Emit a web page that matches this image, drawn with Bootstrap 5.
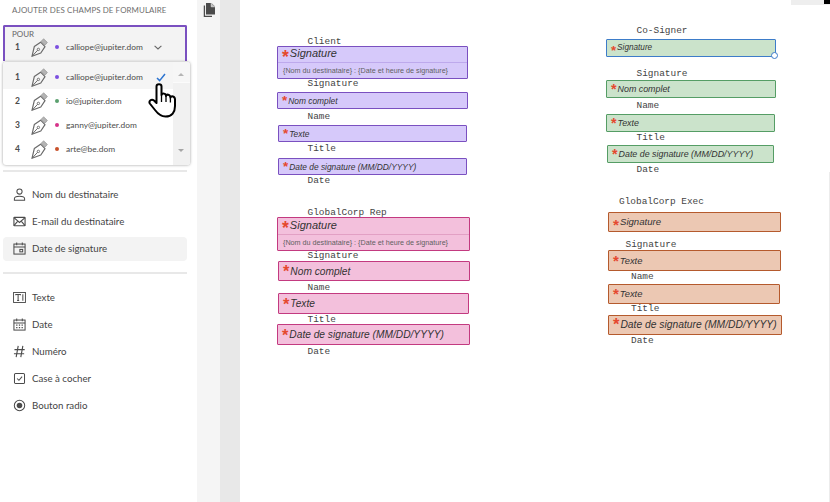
<!DOCTYPE html>
<html lang="fr">
<head>
<meta charset="utf-8">
<title>Ajouter des champs de formulaire</title>
<link href="https://cdn.jsdelivr.net/npm/bootstrap@5.3.0/dist/css/bootstrap.min.css" rel="stylesheet">
<style>
html,body{height:100%;margin:0;overflow:hidden;background:#fff}
body{font-family:Lato,"Open Sans",sans-serif;color:#4b4b4b}
.shell{width:830px;height:502px}
.side{width:197px;flex:none;padding:0 10px 0 3px}
.side-title{font-size:7.9px;letter-spacing:.1px;line-height:11px;padding:5px 0 0 9px;height:25px;color:#6e6e6e;text-transform:uppercase;white-space:nowrap}
.pour{height:36px;border:2px solid #7a50c0;border-bottom:0;border-radius:2px 2px 0 0;background:#f3f3f3;padding:3px 0 0 7px}
.pour-label{font-size:8px;line-height:9px;color:#666}
.rcp{display:flex;align-items:center;font-size:8.4px;height:24px;white-space:nowrap;color:#4b4b4b}
.pour .rcp{height:16px}
.rcp-num{width:11px;font-weight:700;font-size:8.5px;text-align:center;flex:none}
.nib{width:18px;height:19px;flex:none;margin:0 7px 0 7px}
.dot{width:4px;height:4px;border-radius:50%;flex:none;margin-right:7px}
.d-pur{background:#7b4fe0}.d-gre{background:#5aa06e}.d-pin{background:#d6338a}.d-ora{background:#c8512a}
.chev{width:8px;height:5px;margin-left:11px;flex:none}
.menu{width:187px;height:103px;margin-top:1px;background:#fff;border-radius:3px;box-shadow:0 0 3px rgba(0,0,0,.4);overflow:hidden}
.menu-rows{width:170px;flex:none}
.menu .rcp{padding-left:9px;margin-top:0;height:24px}
.menu .rcp.cur{height:27px;background:#f5f5f5;padding-top:3px}
.tick{width:10px;height:9px;margin-left:13px;flex:none}
.sbar{width:17px;flex:none;background:#f1f1f1;position:relative}
.sbar-top{height:21px;background:#f6f6f6;border-bottom:1px solid #fbfbfb}
.ar{width:0;height:0;border-left:3.5px solid transparent;border-right:3.5px solid transparent;position:absolute;left:5px}
.ar-up{border-bottom:3.5px solid #b5b5b5;top:11px}
.ar-dn{border-top:3.5px solid #a5a5a5;top:87px}
.hand{position:absolute;left:148px;top:83px;width:29px;height:35px}
.sep{height:2px;background:#e8e8e8;border:0;opacity:1;margin:0;color:#e8e8e8}
.sep-a{margin-top:5px}
.sep-b{margin-top:11px}
.fields{margin-top:11px}
.sep-b + .fields{margin-top:12px}
.fld{display:flex;align-items:center;height:24px;margin-bottom:3px;padding:0 0 1px 10px;border-radius:4px;font-size:9.7px;color:#444;white-space:nowrap;background:transparent;border:0}
.fld.on{background:#f3f3f3}
.fld svg{width:13px;height:13px;flex:none;margin-right:6px;color:#4b4b4b}
.rail{width:23px;flex:none;background:#f5f5f5;padding:3px 0 0 6px}
.rail svg{display:block;width:12px;height:14px}
.gut{width:20px;flex:none;background:#e8e8e8}
.doc{flex:1 1 auto;position:relative;background:#fff;overflow:hidden}
.corner{position:absolute;right:0;top:0;height:5px;width:39px;background:#eee}
.corner::after{content:"";position:absolute;right:0;top:0;width:6px;height:4px;background:#000}
.edge{position:absolute;right:0;top:172px;bottom:0;width:1px;background:#ececec}
.lab,.box{position:absolute;white-space:nowrap}
.lab{font-family:"Liberation Mono",monospace;font-size:9.45px;line-height:10px;color:#444}
.box{border:1px solid;border-radius:1px;font-family:"Liberation Sans",Arial,sans-serif;font-style:italic;color:#333;line-height:1;display:flex;flex-direction:column}
.box .top{display:flex;align-items:center;flex:1 1 auto;padding-left:4px}
.st{color:#e5492f;font-style:normal;font-weight:700;margin-right:1px;font-size:1.6em;line-height:.6;position:relative}
.s11 .st,.s82 .st,.s96 .st{top:.2em}
.sub{font-style:normal;font-size:7.2px;color:#5f5f5f;border-top:1px solid;height:16px;display:flex;align-items:center;padding-left:5px}
.pur{background:#d6c9fa;border-color:#7a50c0}.pur .sub{border-top-color:#bda9ec}
.pin{background:#f3c0dc;border-color:#c33a80}.pin .sub{border-top-color:#e2a0c4}
.gre{background:#cbe3cb;border-color:#559d65}
.ora{background:#ecc8b3;border-color:#b55a2d}
.sel{border-color:#3d7cc9}
.handle{position:absolute;right:-3px;bottom:-3px;width:7px;height:7px;border-radius:50%;background:#fff;border:1px solid #3d7cc9}
.s82{font-size:8.2px}.s84{font-size:8.4px}.s89{font-size:8.9px}.s94{font-size:9.4px}.s96{font-size:9.6px}.s102{font-size:10.2px}.s103{font-size:10.3px}.s11{font-size:11px}
.s84 .top{padding-top:1px}
.s102 .top{padding-top:2px}
.s11 .top{padding-bottom:2px}
/* canvas places */
.l1{left:67.5px;top:37px}.l2{left:67.5px;top:79px}.l3{left:67.5px;top:112px}.l4{left:67.5px;top:144px}.l5{left:67.5px;top:176px}
.b1{left:37px;top:46px;width:191px;height:33px}.b2{left:37px;top:92px;width:191px;height:17px}.b3{left:38px;top:125px;width:189px;height:17px}.b4{left:38px;top:158px;width:189px;height:17px}
.l6{left:67.5px;top:208px}.l7{left:67.5px;top:251px}.l8{left:67.5px;top:283px}.l9{left:67.5px;top:315px}.l10{left:67.5px;top:347px}
.b5{left:37px;top:217px;width:193px;height:34px}.b6{left:38px;top:261px;width:192px;height:20px}.b7{left:38px;top:293px;width:191px;height:21px}.b8{left:37px;top:324px;width:193px;height:21px}
.l11{left:396.5px;top:26px}.l12{left:396.5px;top:69px}.l13{left:396.5px;top:101px}.l14{left:396.5px;top:133px}.l15{left:396.5px;top:165px}
.b9{left:366px;top:39px;width:170px;height:18px}.b10{left:366px;top:80px;width:170px;height:18px}.b11{left:366px;top:114px;width:169px;height:18px}.b12{left:367px;top:145px;width:167px;height:18px}
.l16{left:379px;top:197px}.l17{left:385.5px;top:240px}.l18{left:391px;top:272px}.l19{left:391px;top:304px}.l20{left:391px;top:336px}
.b13{left:368px;top:212px;width:173px;height:20px}.b14{left:368px;top:250px;width:173px;height:21px}.b15{left:368px;top:284px;width:172px;height:20px}.b16{left:368px;top:315px;width:174px;height:20px}
</style>
</head>
<body>
<svg width="0" height="0" class="d-block position-absolute">
<defs>
<symbol id="nib" viewBox="0 0 18 19">
<path d="M2 18.3 4.3 8.6 10.6 4.2 15 8.6 10.8 15Z" fill="none" stroke="#6a6a6a" stroke-width="1.2" stroke-linejoin="round"/>
<path d="M2 18.3 7.7 12.2" fill="none" stroke="#6a6a6a"/>
<circle cx="8.4" cy="11.4" r="1.2" fill="none" stroke="#6a6a6a" stroke-width=".9"/>
<path d="M11 3.4 13.6.8 17.4 4.4 15 7.2Z" fill="#b4b4b4" stroke="#8a8a8a" stroke-width=".6"/>
</symbol>
</defs>
</svg>
<div class="shell d-flex position-relative">
  <aside class="side">
    <div class="side-title">Ajouter des champs de formulaire</div>
    <div class="pour">
      <div class="pour-label">POUR</div>
      <div class="rcp"><span class="rcp-num">1</span><svg class="nib"><use href="#nib"/></svg><span class="dot d-pur"></span><span>calliope@jupiter.dom</span>
        <svg class="chev" viewBox="0 0 8 5"><path d="M.6.8 4 4 7.4.8" fill="none" stroke="#666" stroke-width="1.1"/></svg></div>
    </div>
    <div class="menu d-flex">
      <div class="menu-rows">
        <div class="rcp cur"><span class="rcp-num">1</span><svg class="nib"><use href="#nib"/></svg><span class="dot d-pur"></span><span>calliope@jupiter.dom</span>
          <svg class="tick" viewBox="0 0 10 9"><path d="M1 5 3.6 7.6 9 1" fill="none" stroke="#2d74d0" stroke-width="1.5"/></svg></div>
        <div class="rcp"><span class="rcp-num">2</span><svg class="nib"><use href="#nib"/></svg><span class="dot d-gre"></span><span>io@jupiter.dom</span></div>
        <div class="rcp"><span class="rcp-num">3</span><svg class="nib"><use href="#nib"/></svg><span class="dot d-pin"></span><span>ganny@jupiter.dom</span></div>
        <div class="rcp"><span class="rcp-num">4</span><svg class="nib"><use href="#nib"/></svg><span class="dot d-ora"></span><span>arte@be.dom</span></div>
      </div>
      <div class="sbar"><div class="sbar-top"></div><span class="ar ar-up"></span><span class="ar ar-dn"></span></div>
    </div>
    <hr class="sep sep-a">
    <div class="fields">
      <div class="fld"><svg viewBox="0 0 14 14" fill="none" stroke="currentColor" stroke-width="1.1"><circle cx="7" cy="3.8" r="2.8"/><path d="M1.5 13.2V11.6C1.5 9.8 4 9 7 9s5.5.8 5.5 2.6v1.6Z"/></svg>Nom du destinataire</div>
      <div class="fld"><svg viewBox="0 0 14 14" fill="none" stroke="currentColor" stroke-width="1.2"><rect x="1" y="2.6" width="12" height="9" rx=".6"/><path d="M1 2.8 7 8l6-5.2M1 11.4 5.2 6.6M13 11.4 8.8 6.6"/></svg>E-mail du destinataire</div>
      <div class="fld on"><svg viewBox="0 0 14 14" fill="none" stroke="currentColor" stroke-width="1.1"><rect x="1" y="2.2" width="12" height="10.8"/><path d="M1 5.4h12M4 .6v3M10 .6v3"/><rect x="7.4" y="8" width="3" height="2.6"/></svg>Date de signature</div>
    </div>
    <hr class="sep sep-b">
    <div class="fields">
      <div class="fld"><svg viewBox="0 0 14 14" fill="none" stroke="currentColor" stroke-width="1"><rect x=".6" y="1.6" width="12.8" height="10.8"/><path d="M3 4.6V3.8h5v.8M5.5 3.8v6.4M4.4 10.2h2.2M10.6 3.6v6.8" stroke-width="1.1"/></svg>Texte</div>
      <div class="fld"><svg viewBox="0 0 14 14" fill="none" stroke="currentColor" stroke-width="1.1"><rect x="1" y="2.2" width="12" height="10.8"/><path d="M1 5.4h12M4 .6v3M10 .6v3"/><path d="M3.4 7.6h1.4M6.3 7.6h1.4M9.2 7.6h1.4M3.4 10.4h1.4M6.3 10.4h1.4M9.2 10.4h1.4" stroke-width="1.4"/></svg>Date</div>
      <div class="fld"><svg viewBox="0 0 14 14" fill="none" stroke="currentColor" stroke-width="1.2"><path d="M5.6 1 3.4 13M10.6 1 8.4 13M1.6 5h11M1 9.4h11"/></svg>Numéro</div>
      <div class="fld"><svg viewBox="0 0 14 14" fill="none" stroke="currentColor" stroke-width="1.1"><rect x="1.6" y="1.6" width="10.8" height="10.8" rx="1.2"/><path d="M4.4 7 6.4 9 9.8 5"/></svg>Case à cocher</div>
      <div class="fld"><svg viewBox="0 0 14 14"><circle cx="7" cy="7" r="5.6" fill="none" stroke="currentColor" stroke-width="1.1"/><circle cx="7" cy="7" r="3" fill="currentColor"/></svg>Bouton radio</div>
    </div>
  </aside>
  <div class="rail"><svg viewBox="0 0 12 14"><path d="M3 0h5.4L12 3.6V11.6H3Z" fill="#4b4b4b"/><path d="M8.2 0v3.8H12" fill="#bbb" stroke="#f5f5f5" stroke-width=".6"/><path d="M1.4 2.4V13.3H9" fill="none" stroke="#4b4b4b" stroke-width="1.3"/></svg></div>
  <div class="gut"></div>
  <main class="doc">
    <div class="corner"></div>
    <div class="edge"></div>

    <div class="lab l1">Client</div>
    <div class="box pur s11 b1"><div class="top"><span class="st">*</span>Signature</div><div class="sub">{Nom du destinataire} : {Date et heure de signature}</div></div>
    <div class="lab l2">Signature</div>
    <div class="box pur s84 b2"><div class="top"><span class="st">*</span>Nom complet</div></div>
    <div class="lab l3">Name</div>
    <div class="box pur s84 b3"><div class="top"><span class="st">*</span>Texte</div></div>
    <div class="lab l4">Title</div>
    <div class="box pur s84 b4"><div class="top"><span class="st">*</span>Date de signature (MM/DD/YYYY)</div></div>
    <div class="lab l5">Date</div>

    <div class="lab l6">GlobalCorp Rep</div>
    <div class="box pin s11 b5"><div class="top"><span class="st">*</span>Signature</div><div class="sub">{Nom du destinataire} : {Date et heure de signature}</div></div>
    <div class="lab l7">Signature</div>
    <div class="box pin s102 b6"><div class="top"><span class="st">*</span>Nom complet</div></div>
    <div class="lab l8">Name</div>
    <div class="box pin s102 b7"><div class="top"><span class="st">*</span>Texte</div></div>
    <div class="lab l9">Title</div>
    <div class="box pin s102 b8"><div class="top"><span class="st">*</span>Date de signature (MM/DD/YYYY)</div></div>
    <div class="lab l10">Date</div>

    <div class="lab l11">Co-Signer</div>
    <div class="box gre sel s82 b9"><div class="top"><span class="st">*</span>Signature</div><span class="handle"></span></div>
    <div class="lab l12">Signature</div>
    <div class="box gre s89 b10"><div class="top"><span class="st">*</span>Nom complet</div></div>
    <div class="lab l13">Name</div>
    <div class="box gre s89 b11"><div class="top"><span class="st">*</span>Texte</div></div>
    <div class="lab l14">Title</div>
    <div class="box gre s89 b12"><div class="top"><span class="st">*</span>Date de signature (MM/DD/YYYY)</div></div>
    <div class="lab l15">Date</div>

    <div class="lab l16">GlobalCorp Exec</div>
    <div class="box ora s96 b13"><div class="top"><span class="st">*</span>Signature</div></div>
    <div class="lab l17">Signature</div>
    <div class="box ora s94 b14"><div class="top"><span class="st">*</span>Texte</div></div>
    <div class="lab l18">Name</div>
    <div class="box ora s94 b15"><div class="top"><span class="st">*</span>Texte</div></div>
    <div class="lab l19">Title</div>
    <div class="box ora s103 b16"><div class="top"><span class="st">*</span>Date de signature (MM/DD/YYYY)</div></div>
    <div class="lab l20">Date</div>
  </main>
  <svg class="hand" viewBox="0 0 29 35"><path d="M8.5 3.5C8.5.5 13.5.5 13.5 3.5V12C14 10 18 10 18 13 18.5 11 22 11 22.5 14.5 23 12.5 27 13 27 16.5V23C27 29 24 33.5 17.5 33.5 13 33.5 10 31 7 27L1.8 20.5C.5 18 3.5 15.5 6 17.5L8.5 20Z" fill="#fff" stroke="#000" stroke-width="2" stroke-linejoin="round"/><path d="M13.5 12v7M18 13v6M22.4 14.5v5" stroke="#000" stroke-width="1.3" fill="none"/></svg>
</div>
<script src="https://cdn.jsdelivr.net/npm/bootstrap@5.3.0/dist/js/bootstrap.bundle.min.js"></script>
</body>
</html>
